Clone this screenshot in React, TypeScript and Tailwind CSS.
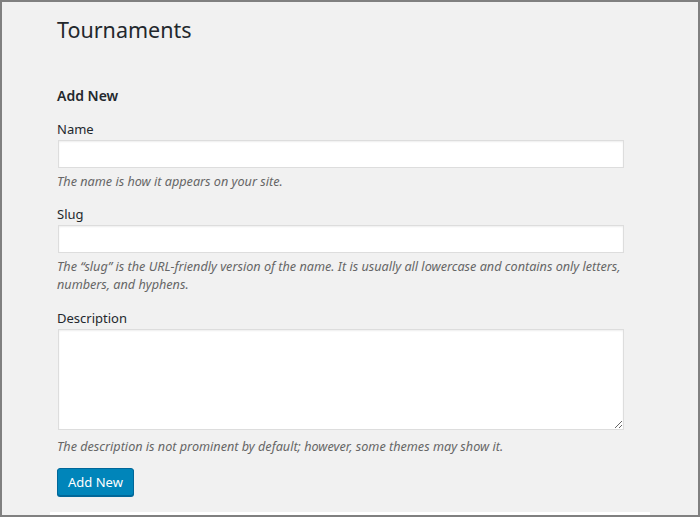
import React from "react";

const font = { fontFamily: '"Noto Sans", "Open Sans", "Liberation Sans", sans-serif' };

function Field({
  label,
  help,
  textarea = false,
}: {
  label: string;
  help: string;
  textarea?: boolean;
}) {
  return (
    <div className="flex flex-col">
      <label className="text-[13px] leading-[18px] text-[#23282d]">{label}</label>
      {textarea ? (
        <textarea className="mt-[2px] ml-px h-[101px] w-[566px] resize-y border border-[#dddddd] bg-white shadow-[inset_0_1px_2px_rgba(0,0,0,0.07)] outline-none" />
      ) : (
        <input className="mt-[2px] ml-px h-[28px] w-[566px] border border-[#dddddd] bg-white shadow-[inset_0_1px_2px_rgba(0,0,0,0.07)] outline-none" />
      )}
      <p
        className={`${textarea ? "mt-[7px]" : "mt-[4px]"} w-[570px] text-[12.65px] italic leading-[18px] text-[#666666]`}
      >
        {help}
      </p>
    </div>
  );
}

export default function App() {
  return (
    <div
      className="box-border flex h-[517px] w-[700px] flex-col overflow-hidden border-2 border-[#808080] bg-[#f1f1f1]"
      style={font}
    >
      <div className="flex flex-1 flex-col pl-[55px] pt-[13px]">
        <h1 className="text-[21.5px] font-normal leading-[29px] text-[#23282d]">Tournaments</h1>

        <h2 className="mt-[43px] text-[14px] font-semibold leading-[18px] text-[#23282d]">Add New</h2>

        <div className="mt-[15px] flex flex-col gap-[15px]">
          <Field label="Name" help="The name is how it appears on your site." />
          <Field
            label="Slug"
            help="The “slug” is the URL-friendly version of the name. It is usually all lowercase and contains only letters, numbers, and hyphens."
          />
          <div className="pt-px">
            <Field
              label="Description"
              textarea
              help="The description is not prominent by default; however, some themes may show it."
            />
          </div>
        </div>

        <div className="mt-[13px]">
          <button className="h-[28px] rounded-[3px] border border-[#006799] bg-[#0085ba] px-[10px] text-[13px] leading-[26px] text-white shadow-[0_1px_0_#006799]">
            Add New
          </button>
        </div>
      </div>
      <div className="ml-[48px] h-[3px] w-[600px] bg-white" />
    </div>
  );
}
